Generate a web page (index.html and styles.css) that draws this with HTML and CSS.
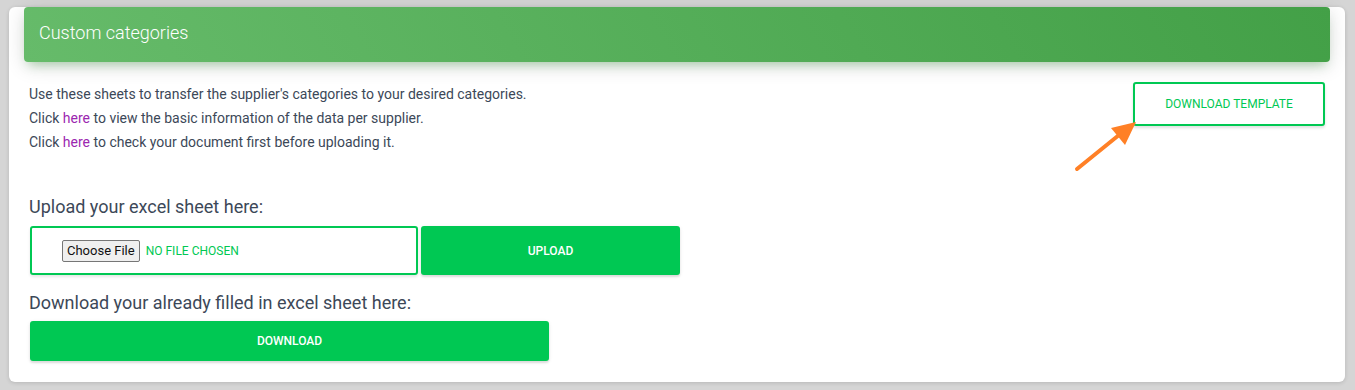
FILE: index.html
```html
<!DOCTYPE html>
<html lang="en">
<head>
    <meta charset="UTF-8">
    <title>Custom categories</title>
    <link rel="stylesheet" href="styles.css">
</head>
<body>
    <div class="card">
        <div class="card-header">
            <h4 class="card-title">Custom categories</h4>
        </div>
        <div class="card-body">
            <div class="intro">
                <div class="intro-text">
                    <p>Use these sheets to transfer the supplier's categories to your desired categories.</p>
                    <p>Click <a href="#">here</a> to view the basic information of the data per supplier.</p>
                    <p>Click <a href="#">here</a> to check your document first before uploading it.</p>
                </div>
                <div class="template-wrap">
                    <button class="btn btn-outline">Download template</button>
                    <svg class="arrow" width="80" height="60" viewBox="0 0 80 60">
                        <line x1="8" y1="54" x2="50" y2="20" stroke="#ff8026" stroke-width="4" stroke-linecap="round"/>
                        <polygon points="67,7 42,13 56,30" fill="#ff8026"/>
                    </svg>
                </div>
            </div>

            <h3 class="section-title">Upload your excel sheet here:</h3>
            <div class="upload-row">
                <label class="file-box">
                    <span class="file-btn">Choose File</span>
                    <span class="file-name">No file chosen</span>
                </label>
                <button class="btn btn-fill btn-upload">Upload</button>
            </div>

            <h3 class="section-title">Download your already filled in excel sheet here:</h3>
            <button class="btn btn-fill btn-download">Download</button>
        </div>
    </div>
</body>
</html>
```

FILE: styles.css
```css
body {
    margin: 0;
    padding: 27px 10px 8px 9px;
    background: #d5d5d5;
    font-family: Roboto, "Liberation Sans", Arial, sans-serif;
    color: #3c4858;
}

.card {
    background: #fff;
    border-radius: 6px;
    box-shadow: 0 1px 4px rgba(0,0,0,0.14);
}

.card-header {
    margin: -20px 15px 0;
    padding: 13px 15px 17px;
    border-radius: 4px;
    background: linear-gradient(60deg, #66bb6a, #43a047);
    box-shadow: 0 4px 20px 0 rgba(0,0,0,0.14), 0 7px 10px -5px rgba(76,175,80,0.4);
}

.card-title {
    margin: 0;
    color: #fff;
    font-size: 18px;
    font-weight: 300;
    line-height: 25px;
}

.card-body {
    padding: 20px 20px 21px;
}

.intro {
    display: flex;
    justify-content: space-between;
    align-items: flex-start;
}

.intro-text p {
    margin: 0;
    font-size: 14px;
    line-height: 24px;
}

.intro-text a {
    color: #9c27b0;
    text-decoration: none;
}

.template-wrap {
    position: relative;
}

.arrow {
    position: absolute;
    left: -64px;
    top: 33px;
}

.btn {
    font-family: Roboto, "Liberation Sans", Arial, sans-serif;
    font-size: 12px;
    font-weight: 400;
    text-transform: uppercase;
    border-radius: 3px;
    cursor: pointer;
}

.btn-outline {
    width: 192px;
    height: 44px;
    background: #fff;
    color: #00c853;
    border: 2px solid #00c853;
    box-shadow: 0 2px 3px rgba(0,0,0,0.12);
}

.btn-fill {
    background: #00c853;
    color: #fff;
    border: none;
    font-weight: 500;
    box-shadow: 0 2px 2px 0 rgba(0,0,0,0.1), 0 1px 4px 0 rgba(0,0,0,0.08);
}

.section-title {
    margin: 40px 0 6px;
    font-size: 18px;
    font-weight: 400;
    line-height: 26px;
}

.upload-row {
    display: flex;
    gap: 3px;
    margin-left: 1px;
}

.file-box {
    display: flex;
    align-items: center;
    gap: 6px;
    width: 388px;
    height: 49px;
    box-sizing: border-box;
    padding-left: 30px;
    border: 2px solid #00c853;
    border-radius: 3px;
    box-shadow: 0 2px 3px rgba(0,0,0,0.1);
}

.file-btn {
    padding: 3px 4px;
    font-size: 13px;
    line-height: 14px;
    color: #111;
    background: #efefef;
    border: 1px solid #767676;
    border-radius: 2px;
}

.file-name {
    font-size: 12px;
    color: #00c853;
    text-transform: uppercase;
}

.btn-upload {
    width: 259px;
    height: 49px;
}

.upload-row + .section-title {
    margin-top: 15px;
    margin-bottom: 5px;
}

.btn-download {
    display: block;
    width: 519px;
    height: 40px;
    margin-left: 1px;
}
```
